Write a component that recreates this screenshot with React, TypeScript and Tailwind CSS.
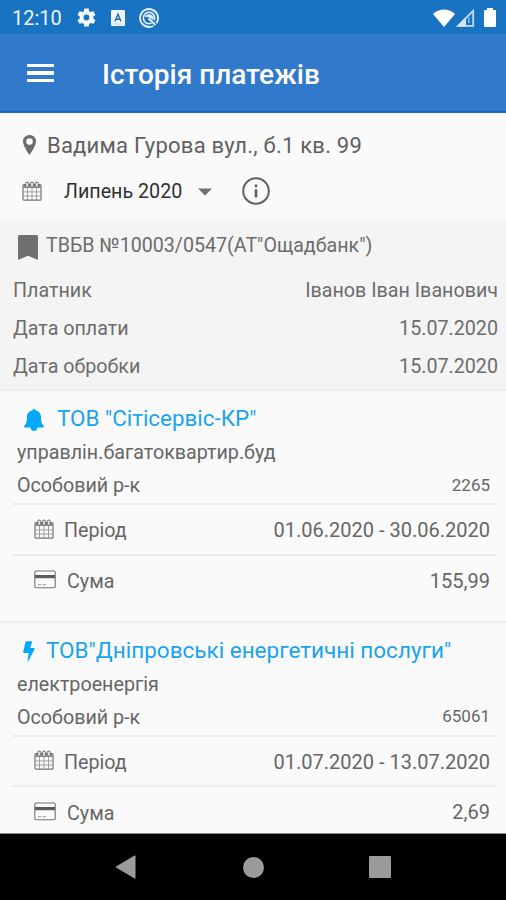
import * as React from "react";

type Payment = {
  icon: "bell" | "bolt";
  company: string;
  service: string;
  account: string;
  period: string;
  sum: string;
};

const payments: Payment[] = [
  {
    icon: "bell",
    company: 'ТОВ "Сітісервіс-КР"',
    service: "управлін.багатоквартир.буд",
    account: "2265",
    period: "01.06.2020 - 30.06.2020",
    sum: "155,99",
  },
  {
    icon: "bolt",
    company: 'ТОВ"Дніпровські енергетичні послуги"',
    service: "електроенергія",
    account: "65061",
    period: "01.07.2020 - 13.07.2020",
    sum: "2,69",
  },
];

/* ----------------- Icons ----------------- */
function GearIcon() {
  return (
    <svg viewBox="2 2 20 20" className="h-[19px] w-[19px]" fill="#f4f9fd">
      <path d="M19.14 12.94c.04-.3.06-.61.06-.94 0-.32-.02-.64-.07-.94l2.03-1.58a.49.49 0 0 0 .12-.61l-1.92-3.32a.49.49 0 0 0-.59-.22l-2.39.96c-.5-.38-1.03-.7-1.62-.94l-.36-2.54a.48.48 0 0 0-.48-.41h-3.84c-.24 0-.43.17-.47.41l-.36 2.54c-.59.24-1.13.57-1.62.94l-2.39-.96a.48.48 0 0 0-.59.22L2.74 8.87c-.12.21-.08.47.12.61l2.03 1.58c-.05.3-.09.63-.09.94s.02.64.07.94l-2.03 1.58a.49.49 0 0 0-.12.61l1.92 3.32c.12.22.37.29.59.22l2.39-.96c.5.38 1.03.7 1.62.94l.36 2.54c.05.24.24.41.48.41h3.84c.24 0 .44-.17.47-.41l.36-2.54c.59-.24 1.13-.56 1.62-.94l2.39.96c.22.08.47 0 .59-.22l1.92-3.32a.49.49 0 0 0-.12-.61l-2.01-1.58zM12 15.1a3.1 3.1 0 1 1 0-6.2 3.1 3.1 0 0 1 0 6.2z" />
    </svg>
  );
}

function KeyboardIcon() {
  return (
    <svg viewBox="0 0 14 16" className="h-4 w-3.5">
      <rect width="14" height="16" rx="1" fill="#f0f7fc" />
      <path d="M4 11.5 7 4.2l3 7.3M5 9.2h4" fill="none" stroke="#2b6ca3" strokeWidth="1.4" />
      <path d="M3.5 14h7" stroke="#b5cfe4" strokeWidth="1" />
    </svg>
  );
}

function CastIcon() {
  return (
    <svg viewBox="0 0 20 20" className="h-5 w-5" fill="none" stroke="#e8f2fa">
      <path d="M17.4 15.2A9 9 0 1 0 10 19q2.5 0 4.3-1" strokeWidth="1.9" />
      <path d="M15.2 12.4A5.7 5.7 0 1 0 10 15.7q1.5 0 2.5-.5" strokeWidth="1.5" />
      <path d="M6 8.5c2-3 6.5-2.5 8.5.5l-1 3c-1-2-3.5-3.5-7.5-3.5z" fill="#e8f2fa" strokeWidth=".6" />
      <path d="M9.5 10.5l7 6.5" strokeWidth="1.9" />
    </svg>
  );
}

function StatusIcons() {
  return (
    <div className="flex items-center">
      <svg viewBox="0 0 22 18" className="h-[18px] w-[22px]" fill="#fff">
        <path d="M0 5C6-1 16-1 22 5L11 18z" />
      </svg>
      <svg viewBox="0 0 19 18" className="ml-px h-[18px] w-[19px]">
        <path d="M2 16.8 17.2 1.8v15z" fill="#1874c3" stroke="#c5dcf0" strokeWidth="1.8" />
        <path d="M1 17.5 10 8.5v9z" fill="#d5e6f4" />
        <path d="M12.8 8.5v5.5" stroke="#8fbce2" strokeWidth="1.5" />
      </svg>
      <svg viewBox="0 0 12 19" className="ml-[9px] h-[19px] w-3" fill="#fff">
        <path d="M3 0h6v2h2q1 0 1 1v15q0 1-1 1H1q-1 0-1-1V3q0-1 1-1h2z" />
      </svg>
    </div>
  );
}

function PinIcon() {
  return (
    <svg viewBox="0 0 13 20" className="h-5 w-[13px]">
      <path
        d="M6.5 0A6.4 6.4 0 0 0 0 6.5C0 11 6.5 20 6.5 20S13 11 13 6.5A6.4 6.4 0 0 0 6.5 0zm0 3.3a3.3 3.3 0 1 1 0 6.6 3.3 3.3 0 0 1 0-6.6z"
        fill="#6b6b6b"
      />
    </svg>
  );
}

function CalendarIcon() {
  return (
    <svg viewBox="0 0 20 20" className="h-5 w-5" fill="none">
      <rect x="1" y="3.5" width="18" height="15.7" rx="1" stroke="#737373" strokeWidth="1.2" />
      <path d="M1.5 4h17v3h-17z" fill="#858585" />
      <path d="M1 10.9h18M1 15h18M5.5 7v12M10 7v12M14.5 7v12" stroke="#a0a0a0" />
      <path d="M3.6 5.5V2.6a1.6 1.6 0 0 1 3.2 0v2.9M8.4 5.5V2.6a1.6 1.6 0 0 1 3.2 0v2.9M13.2 5.5V2.6a1.6 1.6 0 0 1 3.2 0v2.9" fill="#dedede" stroke="#6c6c6c" />
    </svg>
  );
}

function CardIcon() {
  return (
    <svg viewBox="0 0 22 19" className="h-[19px] w-[22px]" fill="none">
      <rect x=".8" y="1" width="20.4" height="16.8" rx="1.2" stroke="#707070" strokeWidth="1.1" />
      <path d="M1 6.6h20" stroke="#5c5c5c" strokeWidth="3.2" />
      <path d="M4 14.7h3M8.5 14.7h3.5" stroke="#999" />
    </svg>
  );
}

function BellIcon() {
  return (
    <svg viewBox="0 0 20 22" className="h-[22px] w-5" fill="#03a9f9">
      <path d="M10 0c1 0 1.6.6 1.7 1.5C15.5 2.2 17 5 17 8c0 5 .8 7 2.6 8.7.8.8.3 1.8-.6 1.8H1c-.9 0-1.4-1-.6-1.8C2.2 15 3 13 3 8c0-3 1.5-5.8 5.3-6.5C8.4.6 9 0 10 0zM6.5 18.5h7C13.2 21 11.7 22 10 22s-3.2-1-3.5-3.5z" />
    </svg>
  );
}

function BoltIcon() {
  return (
    <svg viewBox="0 0 12 21" className="h-[21px] w-3" fill="#03a9f9">
      <path d="M3.3.3h5.2q.7 0 .5.7L7.3 7H11q1 0 .6.9L5.3 20.2q-.7.9-.7-.2L5.8 12H1Q0 12 .2 11L2.5.9Q2.6.3 3.3.3z" />
    </svg>
  );
}

/* ----------------- Page parts ----------------- */
function StatusBar() {
  return (
    <div className="flex h-[34px] items-center bg-[#1874c3] pt-px pr-2.5 pl-3">
      <span className="w-[65px] text-[20px] text-[#edf5fb]">12:10</span>
      <div className="flex flex-1 items-center">
        <GearIcon />
        <div className="ml-[15px]"><KeyboardIcon /></div>
        <div className="ml-[14px]"><CastIcon /></div>
      </div>
      <StatusIcons />
    </div>
  );
}

function AppBar() {
  return (
    <header className="flex h-[79px] items-center border-b-2 border-[#1c69b8] bg-[#3179ca] pt-px pl-[27px]">
      <button aria-label="Меню" className="flex w-[27px] flex-col gap-1">
        <span className="h-[3.5px] bg-white" />
        <span className="h-[3.5px] bg-white" />
        <span className="h-[3.5px] bg-white" />
      </button>
      <h1 className="ml-[48px] pt-1 text-[28px] font-medium whitespace-nowrap text-white">Історія платежів</h1>
    </header>
  );
}

function InfoRow({ label, value }: { label: string; value: string }) {
  return (
    <div className="flex h-[38px] items-center justify-between pt-[2px] text-[19.7px]">
      <span>{label}</span>
      <span>{value}</span>
    </div>
  );
}

function PaymentItem({ item }: { item: Payment }) {
  const bell = item.icon === "bell";
  return (
    <section className="h-[231.5px] border-t-2 border-[#ededed] text-[20px] text-[#666]">
      <div className={bell ? "flex h-[54px] items-center pl-6" : "flex h-[54px] items-center pl-[23px]"}>
        <div className="pt-[3px]">{bell ? <BellIcon /> : <BoltIcon />}</div>
        <h2 className={bell
          ? "ml-[13px] text-[22.4px] whitespace-nowrap text-[#1aa3ee]"
          : "ml-[11px] pt-px text-[22.5px] whitespace-nowrap text-[#1aa3ee]"}>{item.company}</h2>
      </div>
      <div className="flex h-[14px] items-center pt-[2px] pl-[17px] text-[19.7px]">{item.service}</div>
      <div className="mt-[12px] flex h-7 items-center justify-between pr-4 pl-[17px]">
        <span className="pt-[2px] text-[19.7px]">Особовий р-к</span>
        <span className="text-[17px]">{item.account}</span>
      </div>
      <div className="mt-1 mr-[10px] ml-3">
        <div className="flex h-[50.5px] items-center border-t-2 border-[#ededed] pr-[6px] pl-[22px]">
          <div className="pb-px"><CalendarIcon /></div>
          <span className="ml-[10px] flex-1 pt-[4px] text-[19.7px]">Період</span>
          <span className="pt-[2px]">{item.period}</span>
        </div>
        <div className="flex h-[51px] items-center border-t-2 border-[#ededed] pr-[6px] pl-[22px]">
          <div className="pb-px"><CardIcon /></div>
          <span className="ml-[11px] flex-1 pt-[4px] text-[19.7px]">Сума</span>
          <span className="pt-px">{item.sum}</span>
        </div>
      </div>
    </section>
  );
}

function NavBar() {
  return (
    <nav className="flex h-[67px] items-center border-t border-[#8a8a8a] bg-black pl-[115px]">
      <svg viewBox="0 0 21 24" className="h-6 w-[21px]" fill="#9b9b9b"><path d="M20 .8v22.4L1 12z" stroke="#9b9b9b" strokeLinejoin="round" /></svg>
      <span className="ml-[107px] h-[21px] w-[21px] rounded-full bg-[#9b9b9b]" />
      <span className="ml-[105px] h-[22px] w-[22px] rounded-[1px] bg-[#9b9b9b]" />
    </nav>
  );
}

export default function App() {
  return (
    <div className="flex h-[900px] w-[506px] flex-col overflow-hidden bg-[#fafafa] font-['Roboto',sans-serif] leading-none">
      <StatusBar />
      <AppBar />
      <div className="h-[107px] shrink-0 pt-[12px]">
        <div className="flex h-[42px] items-center pl-[23px]">
          <div className="pb-[3px]"><PinIcon /></div>
          <span className="ml-[11px] text-[22px] tracking-[0.22px] whitespace-nowrap text-[#606060]">Вадима Гурова вул., б.1 кв. 99</span>
        </div>
        <div className="flex h-[48px] items-center pl-[22px]">
          <CalendarIcon />
          <span className="ml-[22px] w-[134px] pt-[2px] text-[19.7px] whitespace-nowrap text-[#303030]">Липень 2020</span>
          <svg viewBox="0 0 14 8" className="mt-px h-2 w-3.5" fill="#707070"><path d="M0 .5h14L7 7.5z" /></svg>
          <svg viewBox="0 0 28 28" className="ml-[30px] h-7 w-7" fill="none" stroke="#606060">
            <circle cx="14" cy="14" r="12.8" strokeWidth="2" />
            <path d="M14 7.5v2.8M14 12.3v8" strokeWidth="2.6" />
          </svg>
        </div>
      </div>
      <div className="h-[169px] shrink-0 bg-[#f4f4f4] text-[#6c6c6c]">
        <div className="flex h-[51px] items-center pl-[18px]">
          <svg viewBox="0 0 20 25" className="mt-[3px] h-[25px] w-5" fill="#6f6f6f"><path d="M1.5 0h17Q20 0 20 1.5V25l-10-4.2L0 25V1.5Q0 0 1.5 0z" /></svg>
          <span className="ml-2 text-[19.65px] whitespace-nowrap">ТВБВ №10003/0547(АТ"Ощадбанк")</span>
        </div>
        <div className="pr-2 pl-[13px]">
          <InfoRow label="Платник" value="Іванов Іван Іванович" />
          <InfoRow label="Дата оплати" value="15.07.2020" />
          <InfoRow label="Дата обробки" value="15.07.2020" />
        </div>
      </div>
      <main className="min-h-0 flex-1 overflow-hidden">
        {payments.map((p) => <PaymentItem key={p.account} item={p} />)}
      </main>
      <NavBar />
    </div>
  );
}
